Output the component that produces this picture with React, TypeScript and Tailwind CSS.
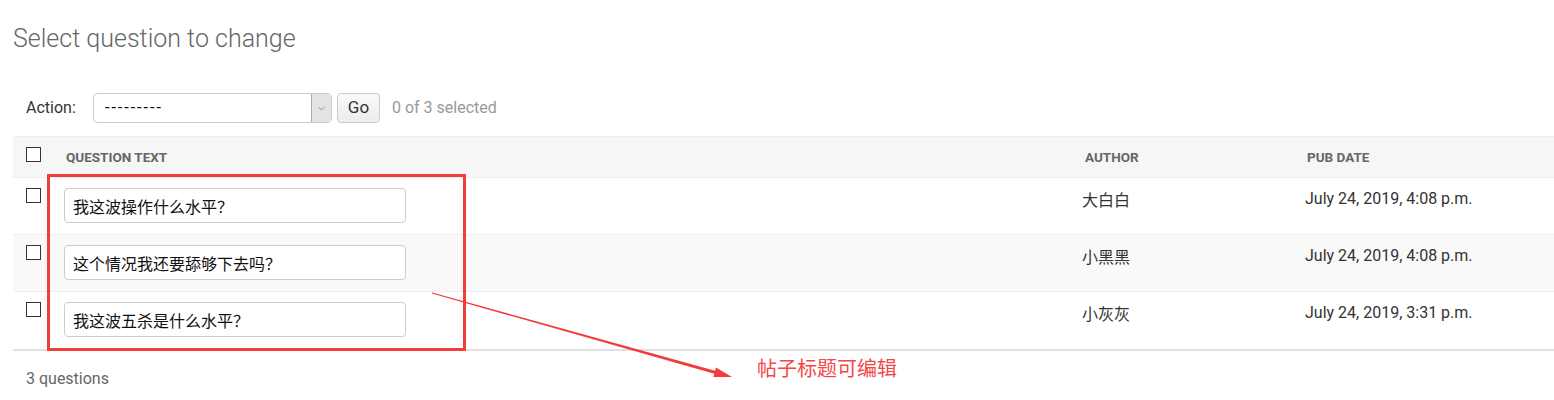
import { ChevronDown } from 'lucide-react';

type Row = { text: string; author: string; date: string };

const rows: Row[] = [
  { text: '我这波操作什么水平？', author: '大白白', date: 'July 24, 2019, 4:08 p.m.' },
  { text: '这个情况我还要舔够下去吗？', author: '小黑黑', date: 'July 24, 2019, 4:08 p.m.' },
  { text: '我这波五杀是什么水平？', author: '小灰灰', date: 'July 24, 2019, 3:31 p.m.' },
];

const latin = "font-['Roboto','Noto_Sans_CJK_SC',sans-serif]";
const cjk = "font-['Noto_Sans_CJK_SC','Roboto',sans-serif]";

function Box() {
  return <input type="checkbox" className="appearance-none block w-[15px] h-[15px] border border-[#333] bg-white m-0" />;
}

export default function App() {
  return (
    <div className={`relative w-full h-[400px] bg-white overflow-hidden ${latin}`}>
      {/* Title */}
      <h1 className="pl-[13px] pt-[24px] text-[25px] leading-[30px] font-light text-[#666]">Select question to change</h1>

      {/* Actions */}
      <div className="flex items-center h-[30px] mt-[39px] pl-[26px] text-[16px]">
        <span className="w-[67px] text-[#333]">Action:</span>
        <div className="flex w-[239px] h-[30px] border border-[#ccc] rounded-[4px] bg-white overflow-hidden">
          <div className="flex-1 flex items-center pl-[11px] text-[#000] tracking-[2px]">---------</div>
          <div className="w-[20px] flex items-center justify-center bg-[#e3e3e3] border-l border-[#aaa]">
            <ChevronDown size={11} strokeWidth={1.2} className="text-[#555]" />
          </div>
        </div>
        <button className="ml-[5px] w-[43px] h-[30px] border border-[#ccc] rounded-[4px] bg-gradient-to-b from-[#fafafa] to-[#ececec] text-[17px] text-[#333]">Go</button>
        <span className="ml-[12px] text-[#999]">0 of 3 selected</span>
      </div>

      {/* Table */}
      <div className="ml-[13px] mt-[13px]">
        <div className="flex h-[42px] bg-[#f6f6f6] border-t border-b border-[#eee]">
          <div className="w-[43px] pl-[13px] pt-[10px]"><Box /></div>
          <div className="w-[1019px] pl-[10px] flex items-center text-[13.5px] font-bold text-[#666]">QUESTION TEXT</div>
          <div className="w-[222px] pl-[10px] flex items-center text-[13.5px] font-bold text-[#666]">AUTHOR</div>
          <div className="flex-1 pl-[10px] flex items-center text-[13.5px] font-bold text-[#666]">PUB DATE</div>
        </div>
        {rows.map((r, i) => {
          const last = i === rows.length - 1;
          return (
            <div
              key={i}
              className={`flex ${last ? 'h-[59px] border-b-2 border-[#e0e0e0]' : 'h-[57px] border-b border-[#eee]'} ${i === 1 ? 'bg-[#f9f9f9]' : 'bg-white'}`}
            >
              <div className="w-[43px] pl-[13px] pt-[10px]"><Box /></div>
              <div className="w-[1019px] pl-[8px] pt-[10px]">
                <input
                  readOnly
                  defaultValue={r.text}
                  className={`block w-[342px] h-[35px] px-[8px] border border-[#ccc] rounded-[4px] bg-white text-[16px] text-[#111] outline-none ${cjk}`}
                />
              </div>
              <div className={`w-[222px] pl-[7px] pt-[10px] text-[16px] leading-[22px] text-[#333] ${cjk}`}>{r.author}</div>
              <div className="flex-1 pl-[8px] pt-[10px] text-[16px] leading-[22px] text-[#333]">{r.date}</div>
            </div>
          );
        })}
      </div>

      {/* Footer */}
      <p className="pl-[26px] mt-[18px] text-[16px] leading-[20px] text-[#666]">3 questions</p>

      {/* Annotation */}
      <div className="absolute left-[47px] top-[174px] w-[419px] h-[177px] border-[3px] border-[#f23b3b]" />
      <svg className="absolute inset-0 w-full h-full pointer-events-none" width="1554" height="400">
        <polygon
          points="432.13,292.52 715.05,370.75 715.98,367.4 732,377 713.32,377 714.25,373.65 431.87,293.48"
          fill="#f23b3b"
        />
      </svg>
      <span className={`absolute left-[757px] top-[358px] text-[20px] leading-[20px] text-[#f34848] ${cjk}`}>帖子标题可编辑</span>
    </div>
  );
}
